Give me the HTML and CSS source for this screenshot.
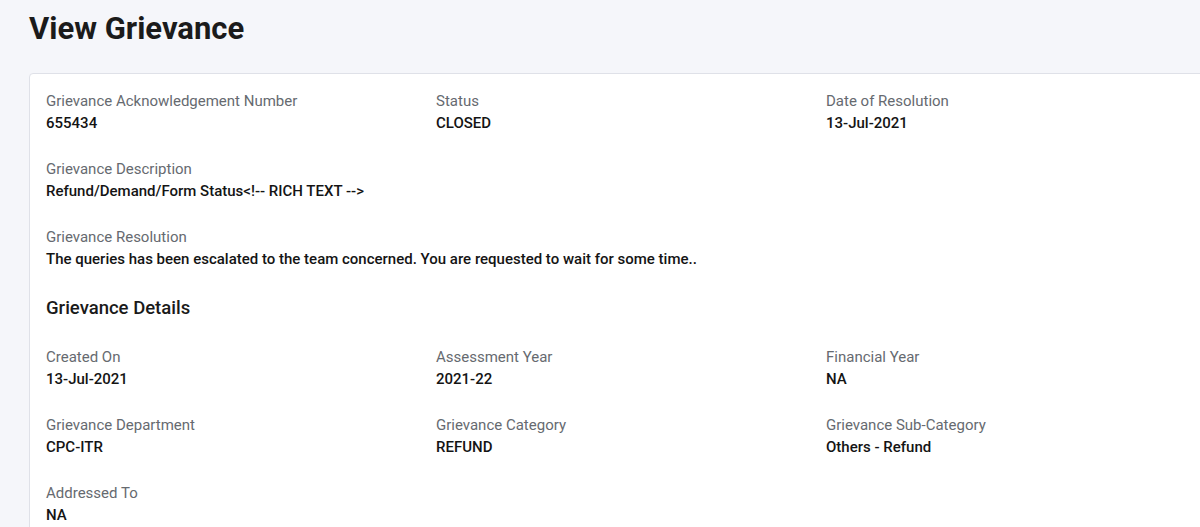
FILE: index.html
```html
<!DOCTYPE html>
<html lang="en">
<head>
<meta charset="utf-8">
<title>View Grievance</title>
<link rel="stylesheet" href="styles.css">
</head>
<body>
<div class="page">
  <h1 class="title">View Grievance</h1>
  <div class="card">
    <div class="grid3">
      <div class="field"><div class="label">Grievance Acknowledgement Number</div><div class="value">655434</div></div>
      <div class="field"><div class="label">Status</div><div class="value">CLOSED</div></div>
      <div class="field"><div class="label">Date of Resolution</div><div class="value">13-Jul-2021</div></div>
    </div>
    <div class="field"><div class="label">Grievance Description</div><div class="value">Refund/Demand/Form Status&lt;!-- RICH TEXT --&gt;</div></div>
    <div class="field"><div class="label">Grievance Resolution</div><div class="value">The queries has been escalated to the team concerned. You are requested to wait for some time..</div></div>
    <h2 class="section">Grievance Details</h2>
    <div class="grid3">
      <div class="field"><div class="label">Created On</div><div class="value">13-Jul-2021</div></div>
      <div class="field"><div class="label">Assessment Year</div><div class="value">2021-22</div></div>
      <div class="field"><div class="label">Financial Year</div><div class="value">NA</div></div>
    </div>
    <div class="grid3">
      <div class="field"><div class="label">Grievance Department</div><div class="value">CPC-ITR</div></div>
      <div class="field"><div class="label">Grievance Category</div><div class="value">REFUND</div></div>
      <div class="field"><div class="label">Grievance Sub-Category</div><div class="value">Others - Refund</div></div>
    </div>
    <div class="field"><div class="label">Addressed To</div><div class="value">NA</div></div>
  </div>
</div>
</body>
</html>
```

FILE: styles.css
```css
html, body {
  margin: 0;
  padding: 0;
  background: #f5f6fa;
  font-family: Roboto, "Liberation Sans", sans-serif;
  color: #1a1a1a;
  overflow: hidden;
}
.page {
  padding: 11px 0 0 29px;
}
.title {
  margin: 0;
  font-size: 31px;
  line-height: 35px;
  font-weight: 700;
  color: #1b1b1b;
}
.card {
  margin-top: 27px;
  width: 1202px;
  box-sizing: border-box;
  background: #fff;
  border: 1px solid #dfe1e8;
  border-radius: 4px;
  padding: 17px 16px 16px 16px;
  display: flex;
  flex-direction: column;
  gap: 25px;
}
.grid3 {
  display: grid;
  grid-template-columns: repeat(3, 390px);
}
.label {
  font-size: 15px;
  line-height: 21px;
  color: #666a70;
}
.value {
  font-size: 15px;
  line-height: 22px;
  font-weight: 500;
  color: #141414;
}
.section {
  margin: 0;
  font-size: 18.5px;
  line-height: 27px;
  font-weight: 500;
  color: #1a1a1a;
}
```
